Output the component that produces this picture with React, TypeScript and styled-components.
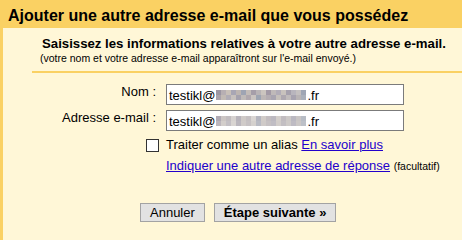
import React from "react";
import styled, { createGlobalStyle } from "styled-components";

const GlobalStyle = createGlobalStyle`
  html {
    background: linear-gradient(to right, #fad163 3px, #fff7d7 3px);
  }
  html, body {
    margin: 0;
    padding: 0;
    font-family: "Liberation Sans", Arial, sans-serif;
    color: #000;
  }
`;

// pixelated part of the address (blurred in the screenshot)
const blurA = [
  ["#9c96a2", "#b7afb3", "#c9c0b8", "#a8a6b4", "#bdb5b1", "#9ea4b3", "#c3bcb8", "#a59ea9", "#b9b4b6", "#cbc5bf", "#a39aa6", "#bfb9b9", "#b2adb8", "#c8c2bd", "#a6a1ad", "#b8b5bd", "#c4c0c0", "#9fa6b5"],
  ["#aaa3ab", "#c2bab4", "#b1adb6", "#c7c1bd", "#a5a2ae", "#bfbab8", "#b0a8ae", "#cac4c0", "#9ea5b2", "#bdb7b6", "#b4adb2", "#a9a5b1", "#c6c0bb", "#aea8b0", "#c0bbbb", "#a7a3b0", "#b9b4b5", "#aab0bb"],
];
const blurB = [
  ["#b0aab4", "#ccc6c4", "#c2bdc0", "#d6d2d0", "#b8b4bc", "#cfcac7", "#c5c0c2", "#dad6d3", "#b5b6c0", "#d1ccc8", "#c3bdc0", "#bcb9c1", "#d4cfcb", "#c1bcc0", "#cdc9c7", "#bab8c1", "#c9c5c4", "#b7bcc5"],
  ["#bdb7bd", "#d3cecb", "#c4c0c5", "#d9d5d2", "#bbb7be", "#d0cbc9", "#c7c2c4", "#d5d1ce", "#b9bbc4", "#cfcac8", "#c6c1c3", "#c0bdc4", "#d2cdca", "#c3bfc3", "#cecac8", "#bebbc3", "#cbc7c6", "#bcc0c8"],
];

export default function App() {
  return (
    <Page>
      <GlobalStyle />
      <TitleBar>Ajouter une autre adresse e-mail que vous possédez</TitleBar>
      <Panel>
        <Intro>
          <Heading>Saisissez les informations relatives à votre autre adresse e-mail.</Heading>
          <Hint>(votre nom et votre adresse e-mail apparaîtront sur l'e-mail envoyé.)</Hint>
        </Intro>
        <Separator />
        <Form>
          <Label>Nom :</Label>
          <Field>
            testikl@
            <Pixels rows={blurA} />
            .fr
          </Field>
          <Label>Adresse e-mail :</Label>
          <Field>
            testikl@
            <Pixels rows={blurB} />
            .fr
          </Field>
          <CheckCell>
            <Check />
          </CheckCell>
          <OptionText $top={1}>
            Traiter comme un alias <Link href="#">En savoir plus</Link>
          </OptionText>
          <span />
          <OptionText>
            <Link href="#">Indiquer une autre adresse de réponse</Link> <Small>(facultatif)</Small>
          </OptionText>
        </Form>
        <Buttons>
          <Button>Annuler</Button>
          <Button $primary>Étape suivante »</Button>
        </Buttons>
      </Panel>
    </Page>
  );
}

function Pixels({ rows }: { rows: string[][] }) {
  return (
    <PixelGrid>
      {rows.map((row, r) => (
        <PixelRow key={r}>
          {row.map((c, i) => (
            <Pixel key={i} $c={c} />
          ))}
        </PixelRow>
      ))}
    </PixelGrid>
  );
}

const Page = styled.div`
  display: flex;
  flex-direction: column;
  min-height: 100vh;
`;

const TitleBar = styled.div`
  height: 28px;
  flex: none;
  box-sizing: border-box;
  padding: 4px 0 0 8px;
  background: #fad163;
  font-size: 16px;
  line-height: 24px;
  font-weight: bold;
  white-space: nowrap;
`;

const Panel = styled.div`
  flex: 1;
  border-left: 3px solid #fad163;
  background: #fff7d7;
  overflow: hidden;
`;

const Intro = styled.div`
  padding: 8px 0 0 37px;
`;

const Heading = styled.div`
  padding-left: 2px;
  font-size: 13.2px;
  line-height: 16px;
  font-weight: bold;
  white-space: nowrap;
`;

const Hint = styled.div`
  font-size: 10.5px;
  line-height: 13px;
  white-space: nowrap;
`;

const Separator = styled.div`
  margin: 6px 0 0 29px;
  height: 2px;
  background: #fad163;
`;

const Form = styled.div`
  display: grid;
  grid-template-columns: 153px 238px;
  column-gap: 10px;
  row-gap: 5px;
  align-items: start;
  margin-top: 11px;
  font-size: 13px;
`;

const Label = styled.div`
  text-align: right;
  line-height: 16px;
  white-space: nowrap;
`;

const Field = styled.div`
  display: flex;
  align-items: center;
  height: 21px;
  box-sizing: border-box;
  padding: 2px 0 0 2px;
  border: 1px solid #7b7b7b;
  background: #fff;
  line-height: 16px;
  white-space: nowrap;
`;

const PixelGrid = styled.span`
  display: inline-flex;
  flex-direction: column;
  margin: -2px 1px 0 1px;
`;

const PixelRow = styled.span`
  display: flex;
`;

const Pixel = styled.span<{ $c: string }>`
  width: 5px;
  height: 5px;
  background: ${(p) => p.$c};
`;

const CheckCell = styled.div`
  display: flex;
  justify-content: flex-end;
  margin: 3px -3px 0 0;
`;

const Check = styled.span`
  width: 11px;
  height: 11px;
  border: 1px solid #333;
  background: #fff;
`;

const OptionText = styled.div<{ $top?: number }>`
  margin-top: ${(p) => p.$top ?? 0}px;
  line-height: 16px;
  white-space: nowrap;
`;

const Link = styled.a`
  color: #2200cc;
  text-decoration: underline;
`;

const Small = styled.span`
  font-size: 10.5px;
`;

const Buttons = styled.div`
  display: flex;
  gap: 9px;
  padding: 29px 0 0 137px;
`;

const Button = styled.button<{ $primary?: boolean }>`
  height: 19px;
  padding: 0 9px;
  box-sizing: border-box;
  border: 1px solid #a3a3a3;
  background: #e2e2e2;
  font-family: "Liberation Sans", Arial, sans-serif;
  font-size: 13px;
  line-height: 17px;
  font-weight: ${(p) => (p.$primary ? "bold" : "normal")};
  color: #000;
  border-radius: 0;
`;
